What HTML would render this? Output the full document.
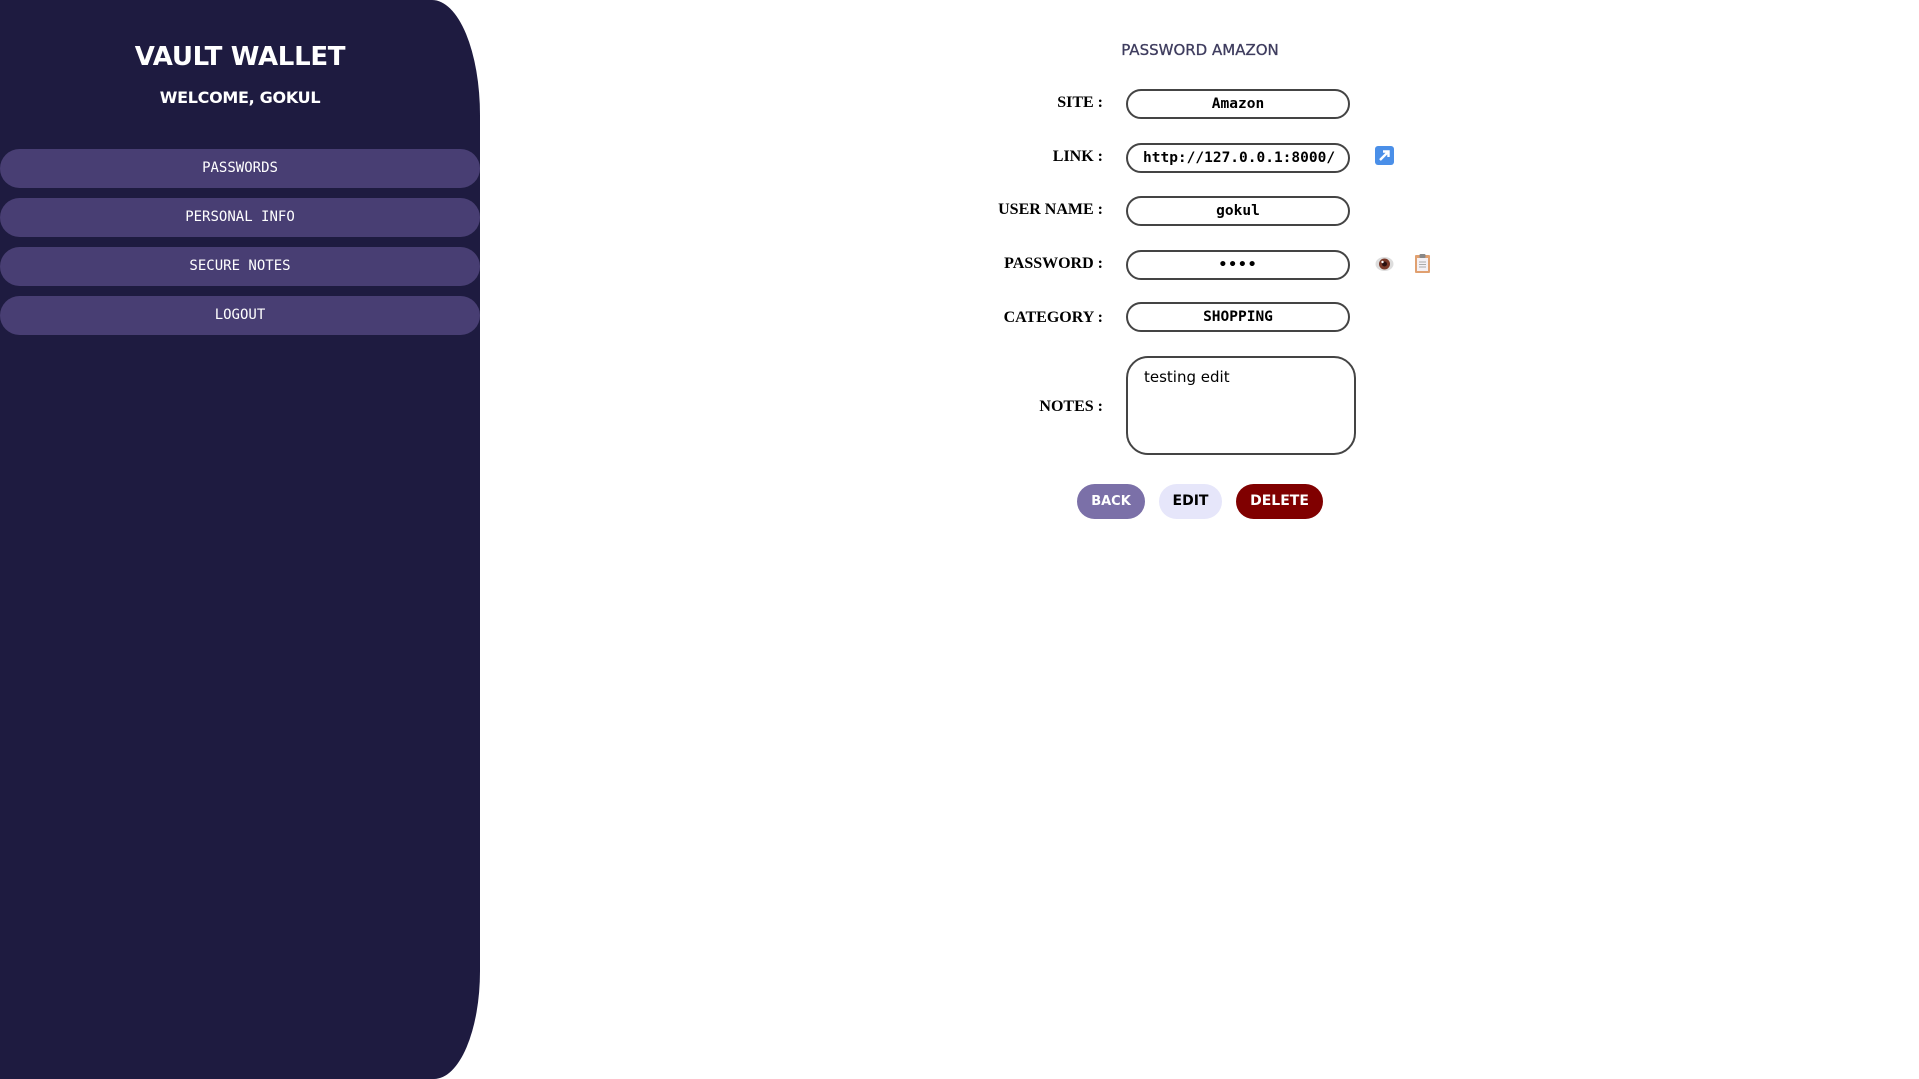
<!DOCTYPE html>
<html><head><meta charset="utf-8"><style>
*{box-sizing:border-box;margin:0;padding:0}
body{width:1919px;height:1079px;background:#fff;position:relative;overflow:hidden;font-family:"Liberation Sans",sans-serif}
.side{position:absolute;left:0;top:0;width:480px;height:1079px;background:#1e1b40;border-radius:0 48px 46px 0/0 115px 108px 0}
.t1{position:absolute;left:0;width:480px;text-align:center;color:#fff;font-family:"DejaVu Sans",sans-serif;font-weight:bold}
.nav{position:absolute;left:0;width:480px;height:39px;border-radius:20px;background:#483e73;color:#fff;font-family:"DejaVu Sans Mono",monospace;font-size:14px;line-height:39px;text-align:center}
.lbl{position:absolute;right:816px;font-family:"Liberation Serif",serif;font-weight:bold;font-size:16px;color:#000;text-align:right}
.inp{position:absolute;left:1126px;width:224px;height:30px;border:2px solid #444;border-radius:15px;font-family:"DejaVu Sans Mono",monospace;font-weight:bold;font-size:14.5px;line-height:26px;text-align:center;color:#000;overflow:hidden;white-space:nowrap}
.btn{position:absolute;top:484px;height:35px;border-radius:18px;font-family:"DejaVu Sans",sans-serif;font-weight:bold;font-size:14px;line-height:35px;text-align:center}
</style></head><body>
<div class="side"></div>
<div class="t1" style="top:42px;font-size:26px;letter-spacing:-0.3px">VAULT WALLET</div>
<div class="t1" style="top:88px;font-size:16px;letter-spacing:-0.3px">WELCOME, GOKUL</div>
<div class="nav" style="top:149px">PASSWORDS</div>
<div class="nav" style="top:198px">PERSONAL INFO</div>
<div class="nav" style="top:247px">SECURE NOTES</div>
<div class="nav" style="top:296px">LOGOUT</div>

<div style="position:absolute;left:1080px;width:240px;top:41px;text-align:center;color:#3e3c5e;font-family:'DejaVu Sans',sans-serif;font-size:15px;-webkit-text-stroke:0.3px #3e3c5e">PASSWORD AMAZON</div>

<div class="lbl" style="top:94px">SITE :</div>
<div class="inp" style="top:89px">Amazon</div>
<div class="lbl" style="top:148px">LINK :</div>
<div class="inp" style="top:143px;text-align:left;padding-left:15px">http://127.0.0.1:8000/</div>
<svg style="position:absolute;left:1375px;top:146px" width="19" height="19" viewBox="0 0 19 19"><rect width="19" height="19" rx="3" fill="#4a8fe8"/><path d="M5 14L13 6M8 5.5h5.5V11" stroke="#fff" stroke-width="2.4" fill="none"/></svg>
<div class="lbl" style="top:201px">USER NAME :</div>
<div class="inp" style="top:196px">gokul</div>
<div class="lbl" style="top:255px">PASSWORD :</div>
<div class="inp" style="top:250px;letter-spacing:1px">••••</div>
<svg style="position:absolute;left:1375px;top:256px" width="19" height="16" viewBox="0 0 19 16"><ellipse cx="9.5" cy="8" rx="9" ry="7" fill="#ddd"/><circle cx="9.5" cy="8" r="5.5" fill="#7a3a2a"/><circle cx="9.5" cy="8" r="2.5" fill="#2a1010"/><circle cx="7.5" cy="6" r="1.2" fill="#fff"/></svg>
<svg style="position:absolute;left:1415px;top:254px" width="15" height="19" viewBox="0 0 15 19"><rect x="0" y="1" width="15" height="18" rx="1" fill="#e0a070"/><rect x="2" y="4" width="11" height="13" fill="#f4f0f4"/><rect x="4.5" y="0" width="6" height="4" rx="1" fill="#888"/><path d="M4 8h7M4 10.5h7M4 13h7" stroke="#aaa" stroke-width="1"/></svg>
<div class="lbl" style="top:309px">CATEGORY :</div>
<div class="inp" style="top:302px">SHOPPING</div>
<div class="lbl" style="top:398px">NOTES :</div>
<div style="position:absolute;left:1126px;top:356px;width:230px;height:99px;border:2px solid #444;border-radius:22px;padding:10px 16px;font-family:'DejaVu Sans',sans-serif;font-size:15px;color:#000">testing edit</div>

<div class="btn" style="left:1077px;width:68px;background:#7b70a8;color:#fff;font-size:13px">BACK</div>
<div class="btn" style="left:1159px;width:63px;background:#e6e6fa;color:#000">EDIT</div>
<div class="btn" style="left:1236px;width:87px;background:#800000;color:#fff">DELETE</div>
</body></html>
